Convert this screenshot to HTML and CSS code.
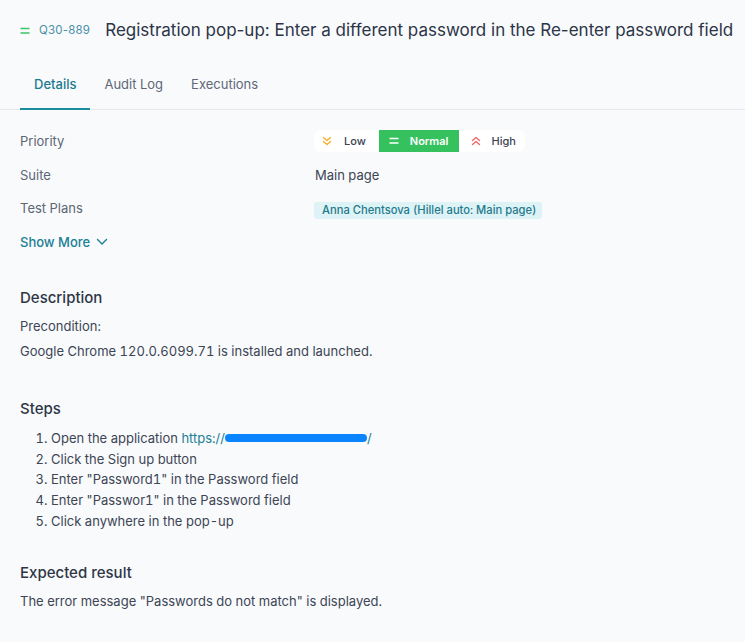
FILE: index.html
```html
<!DOCTYPE html>
<html>
<head>
<meta charset="utf-8">
<link rel="stylesheet" href="styles.css">
</head>
<body>
<div class="page">
  <header class="header">
    <svg class="eq-icon" width="10" height="8" viewBox="0 0 10 8"><path d="M0.5 1.5H9.5M0.5 6H9.5" stroke="#3cc46a" stroke-width="1.6" fill="none"/></svg>
    <span class="key">Q30-889</span>
    <h1 class="title">Registration pop-up: Enter a different password in the Re-enter password field</h1>
  </header>
  <nav class="tabs">
    <div class="tab active">Details</div>
    <div class="tab">Audit Log</div>
    <div class="tab">Executions</div>
  </nav>
  <section class="props">
    <div class="row">
      <div class="label">Priority</div>
      <div class="value">
        <div class="seg">
          <div class="seg-item low">
            <svg width="10" height="10" viewBox="0 0 10 10"><path d="M1.5 1.5L5 4.5L8.5 1.5M1.5 5.5L5 8.5L8.5 5.5" stroke="#f5b02e" stroke-width="1.4" fill="none" stroke-linecap="round" stroke-linejoin="round"/></svg>
            <span>Low</span>
          </div>
          <div class="seg-item on">
            <svg width="10" height="8" viewBox="0 0 10 8"><path d="M0.5 1.5H9.5M0.5 6H9.5" stroke="#ffffff" stroke-width="1.6" fill="none"/></svg>
            <span>Normal</span>
          </div>
          <div class="seg-item high">
            <svg width="10" height="10" viewBox="0 0 10 10"><path d="M1.5 4.5L5 1.5L8.5 4.5M1.5 8.5L5 5.5L8.5 8.5" stroke="#f06868" stroke-width="1.4" fill="none" stroke-linecap="round" stroke-linejoin="round"/></svg>
            <span>High</span>
          </div>
        </div>
      </div>
    </div>
    <div class="row">
      <div class="label">Suite</div>
      <div class="value text">Main page</div>
    </div>
    <div class="row">
      <div class="label">Test Plans</div>
      <div class="value"><span class="badge">Anna Chentsova (Hillel auto: Main page)</span></div>
    </div>
    <div class="row">
      <div class="show-more">Show More
        <svg width="12" height="8" viewBox="0 0 12 8"><path d="M1.5 1.5L6 6L10.5 1.5" stroke="#1b7f95" stroke-width="1.4" fill="none" stroke-linecap="round" stroke-linejoin="round"/></svg>
      </div>
    </div>
  </section>

  <section class="block desc">
    <h2 class="heading">Description</h2>
    <p class="para">Precondition:</p>
    <p class="para gap">Google Chrome 120.0.6099.71 is installed and launched.</p>
  </section>

  <section class="block steps">
    <h2 class="heading">Steps</h2>
    <ol class="list">
      <li>Open the application <span class="link">https://<span class="redact"></span>/</span></li>
      <li>Click the Sign up button</li>
      <li>Enter "Password1" in the Password field</li>
      <li>Enter "Passwor1" in the Password field</li>
      <li>Click anywhere in the pop-up</li>
    </ol>
  </section>

  <section class="block expected">
    <h2 class="heading">Expected result</h2>
    <p class="para">The error message "Passwords do not match" is displayed.</p>
  </section>
</div>
</body>
</html>
```
FILE: styles.css
```css
* { box-sizing: border-box; }
html, body {
  margin: 0;
  padding: 0;
  background: #f8fafc;
  font-family: Inter, "Noto Sans", sans-serif;
  color: #3d4554;
  font-variant-numeric: tabular-nums;
}
.page {
  padding: 0 0 0 20px;
  width: 745px;
  height: 642px;
  overflow: hidden;
}
.header {
  height: 60px;
  display: flex;
  align-items: center;
  white-space: nowrap;
}
.eq-icon { margin-top: 1px; }
.key {
  margin-left: 9px;
  font-size: 11.5px;
  color: #4b8fa6;
  font-variant-numeric: normal;
  letter-spacing: 0.2px;
}
.title {
  margin: 0 0 0 15px;
  font-size: 17px;
  font-weight: 400;
  color: #2c3447;
  font-variant-numeric: normal;
}
.tabs {
  display: flex;
  height: 50px;
  margin-left: -20px;
  padding-left: 20px;
  border-bottom: 1px solid #e4e7eb;
}
.tab {
  padding: 0 14px;
  display: flex;
  align-items: center;
  font-size: 13px;
  color: #5f6877;
  border-bottom: 2px solid transparent;
  margin-bottom: -1px;
}
.tab.active {
  color: #1d7b8f;
  font-weight: 500;
  border-bottom-color: #1a8c9c;
}
.props {
  margin-top: 14px;
}
.row {
  display: flex;
  align-items: center;
  height: 33.7px;
}
.label {
  width: 294px;
  font-size: 13px;
  color: #5d6674;
}
.value.text {
  font-size: 13px;
  color: #3d4554;
  padding-left: 1px;
}
.seg {
  display: flex;
  height: 22px;
  background: #ffffff;
  border-radius: 7px;
  overflow: hidden;
}
.seg-item {
  display: flex;
  align-items: center;
  font-size: 11px;
  color: #3b4352;
  font-weight: 500;
}
.seg-item.low { padding: 0 13px 0 8px; gap: 12px; }
.seg-item.on {
  background: #35c25e;
  color: #ffffff;
  font-weight: 600;
  padding: 0 11px 0 10px;
  gap: 11px;
}
.seg-item.high { padding: 0 9px 0 12px; gap: 10px; }
.badge {
  display: inline-block;
  height: 17px;
  line-height: 17px;
  padding: 0 6px 0 8px;
  border-radius: 3px;
  background: #def3f6;
  color: #1e7a8d;
  font-size: 11.2px;
  font-weight: 500;
}
.show-more {
  display: flex;
  align-items: center;
  gap: 6px;
  font-size: 13px;
  color: #1b7f95;
  font-weight: 500;
}
.block { margin: 0; }
.heading {
  margin: 0;
  font-size: 15px;
  line-height: 22px;
  font-weight: 500;
  color: #2e3646;
}
.desc { margin-top: 28px; }
.desc .heading { margin-bottom: 7px; }
.para {
  margin: 0;
  font-size: 13px;
  line-height: 20px;
  color: #3d4554;
}
.para.gap { margin-top: 5px; }
.steps { margin-top: 37px; }
.list {
  margin: 8px 0 0 0;
  padding-left: 31px;
  font-size: 13px;
  line-height: 20.75px;
  color: #3d4554;
}
.link { color: #1b7f95; }
.redact {
  display: inline-block;
  background: #0b84ff;
  height: 8px;
  border-radius: 4px;
  vertical-align: 1px;
  width: 142px;
}
.expected { margin-top: 30px; }
.expected .heading { margin-bottom: 7px; }
```
